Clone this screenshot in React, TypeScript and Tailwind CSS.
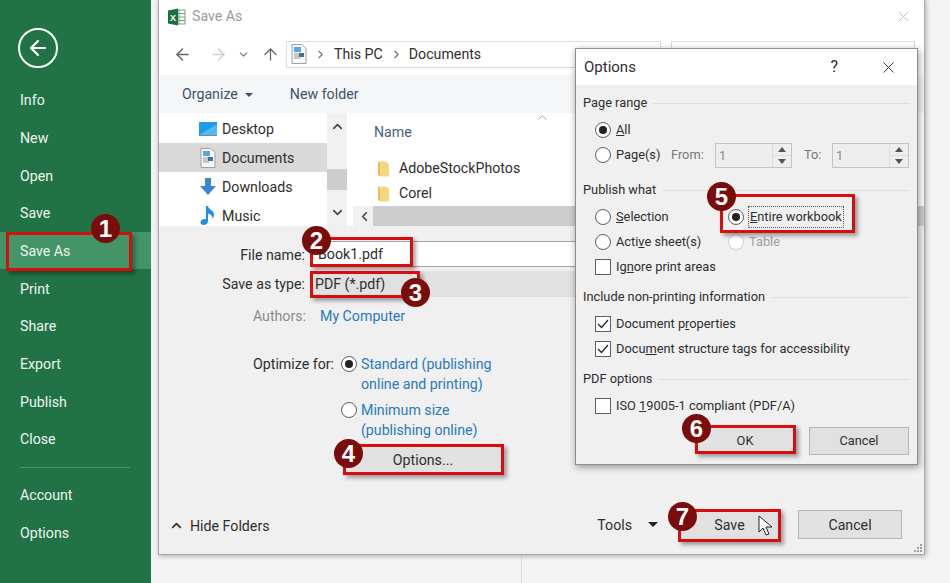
import React from "react";
import { ArrowLeft, ArrowRight, ArrowUp, ChevronDown, ChevronUp, ChevronLeft, ChevronRight, X } from "lucide-react";

const sideTop = ["Info", "New", "Open", "Save", "Save As", "Print", "Share", "Export", "Publish", "Close"];

function DocIcon() {
  return (
    <svg width="16" height="20" viewBox="0 0 16 20">
      <path d="M1 .5h10l4 4v15H1z" fill="#f7f7f7" stroke="#9aa0a6" />
      <rect x="3" y="3" width="7" height="5" fill="#5aa7e0" />
      <path d="M3 10h10M3 12h10M3 14h6" stroke="#8c9aa8" />
      <rect x="8" y="9" width="5" height="4" fill="#4a6f95" />
    </svg>
  );
}

function FolderIcon() {
  return (
    <svg width="13" height="17" viewBox="0 0 13 17">
      <path d="M1 1.500h7l4 2v13H3l-2-2z" fill="#f7d77e" />
      <path d="M1 1.500v13l2 2V3.500z" fill="#e8bd55" />
    </svg>
  );
}

function Radio({ on, off }: { on?: boolean; off?: boolean }) {
  return (
    <span className={off ? "flex h-[16px] w-[16px] shrink-0 items-center justify-center rounded-full border border-[#cfcfcf] bg-white" : "flex h-[16px] w-[16px] shrink-0 items-center justify-center rounded-full border border-[#5f5f5f] bg-white"}>
      {on ? <span className="h-[8px] w-[8px] rounded-full bg-[#222]" /> : null}
    </span>
  );
}

function Check({ on }: { on?: boolean }) {
  return (
    <span className="flex h-[16px] w-[16px] shrink-0 items-center justify-center border border-[#5f5f5f] bg-white">
      {on ? (
        <svg width="12" height="10" viewBox="0 0 12 10">
          <path d="M1 5l3.500 3.500L11 1" fill="none" stroke="#222" strokeWidth="1.2" />
        </svg>
      ) : null}
    </span>
  );
}

function Heading({ children }: { children: React.ReactNode }) {
  return (
    <div className="flex h-[20px] items-center gap-[6px] pr-[7px]">
      <span className="whitespace-nowrap">{children}</span>
      <span className="h-px flex-1 bg-[#e0e0e0]" />
    </div>
  );
}

function Spin() {
  return (
    <div className="flex h-[25px] w-[77px] items-center border border-[#c4c4c4] bg-[#eeeeee] text-[#8a8a8a]">
      <span className="flex-1 pl-[3px] pt-[2px]">1</span>
      <div className="flex h-full w-[19px] flex-col border-l border-[#dcdcdc]">
        <span className="flex flex-1 items-center justify-center border-b border-[#dcdcdc]">
          <span className="h-0 w-0 border-x-[4px] border-b-[5px] border-x-transparent border-b-[#555]" />
        </span>
        <span className="flex flex-1 items-center justify-center">
          <span className="h-0 w-0 border-x-[4px] border-t-[5px] border-x-transparent border-t-[#555]" />
        </span>
      </div>
    </div>
  );
}

function Mark({ className }: { className: string }) {
  return <div className={`absolute border-[3px] border-[#d80e0e] shadow-[3px_3px_4px_rgba(0,0,0,0.35)] ${className}`} />;
}

function Badge({ n, className }: { n: number; className: string }) {
  return (
    <div className={`absolute flex h-[29px] w-[29px] items-center justify-center rounded-full bg-[#7a0c0c] font-['Liberation_Sans',sans-serif] text-[24px] font-bold leading-none text-white ${className}`}>
      {n}
    </div>
  );
}

export default function App() {
  return (
    <div className="relative flex h-[583px] w-[950px] overflow-hidden bg-[#f3f3f3] font-['Roboto',sans-serif] text-[14.2px] text-[#2e2e2e]">
      {/* Backstage sidebar */}
      <aside className="flex h-full w-[151px] shrink-0 flex-col bg-[#217346] text-[14.2px] text-[#eef5f0]">
        <div className="flex h-[81px] items-start pl-[18px] pt-[28px]">
          <span className="flex h-[40px] w-[40px] items-center justify-center rounded-full border-[2px] border-white">
            <ArrowLeft size={24} strokeWidth={2.2} color="#fff" />
          </span>
        </div>
        {sideTop.map((t) => (
          <div key={t} className={t === "Save As" ? "flex h-[37.7px] items-center bg-[#439467] pl-[20px] pt-[2px]" : "flex h-[37.7px] items-center pl-[20px] pt-[2px]"}>
            {t}
          </div>
        ))}
        <div className="ml-[20px] mr-[21px] mt-[9px] h-px bg-[#4a8f69]" />
        <div className="mt-[8px] flex h-[37.7px] items-center pl-[20px] pt-[2px]">Account</div>
        <div className="flex h-[37.7px] items-center pl-[20px] pt-[2px]">Options</div>
      </aside>

      {/* Backdrop rule under the dialog */}
      <div className="absolute bottom-0 left-[521px] h-[28px] w-px bg-[#dddddd]" />

      {/* Save As window */}
      <section className="absolute left-[158px] top-[-1px] flex h-[556px] w-[767px] flex-col border border-[#a8a8a8] bg-white shadow-[1px_1px_5px_rgba(0,0,0,0.3)]">
        <div className="flex h-[33px] shrink-0 items-center pl-[9px] pr-[12px]">
          <svg width="18" height="18" viewBox="0 0 18 18">
            <rect x="7" y="2" width="10" height="14" fill="#fff" stroke="#6fa287" />
            <path d="M7 5.500h10M7 9h10M7 12.500h10M11 2v14" stroke="#6fa287" />
            <path d="M0 2.500L10 .5v17L0 15.500z" fill="#1d6f42" />
            <text x="2" y="12.500" fill="#fff" fontSize="9" fontWeight="700" fontFamily="Liberation Sans">X</text>
          </svg>
          <span className="ml-[6px] text-[#9b9b9b]">Save As</span>
          <span className="ml-auto text-[#b5b5b5]"><X size={17} strokeWidth={1.2} /></span>
        </div>
        <div className="flex h-[42px] shrink-0 items-center pl-[14px] pr-[9px]">
          <ArrowLeft size={19} strokeWidth={1.8} color="#666" />
          <ArrowRight size={19} strokeWidth={1.8} color="#cfcfcf" className="ml-[17px]" />
          <ChevronDown size={13} strokeWidth={2} color="#777" className="ml-[9px]" />
          <ArrowUp size={19} strokeWidth={1.6} color="#666" className="ml-[11px]" />
          <div className="ml-[6px] flex h-[27px] w-[375px] items-center border border-[#dcdcdc] pl-[4px]">
            <DocIcon />
            <ChevronRight size={13} strokeWidth={2.2} color="#777" className="ml-[7px]" />
            <span className="ml-[7px] pt-[2px]">This PC</span>
            <ChevronRight size={13} strokeWidth={2.2} color="#777" className="ml-[7px]" />
            <span className="ml-[6px] pt-[2px]">Documents</span>
          </div>
          <div className="ml-[10px] h-[27px] flex-1 border border-[#dcdcdc]" />
        </div>
        <div className="flex h-[38px] shrink-0 items-center bg-[#f5f6f7] pl-[23px] pt-[2px] text-[#3d5269]">
          <span>Organize</span>
          <span className="ml-[7px] h-0 w-0 border-x-[4px] border-t-[4px] border-x-transparent border-t-[#3d5269]" />
          <span className="ml-[37px]">New folder</span>
        </div>
        <div className="flex h-[113px] shrink-0">
          <div className="w-[168px] shrink-0 pt-[1px]">
            <div className="flex h-[29px] items-center pl-[40px]">
              <svg width="18" height="14" viewBox="0 0 18 14"><rect width="18" height="13" fill="#1f9be8" /><path d="M0 13L18 2v11z" fill="#4fb9f2" /><rect y="13" width="18" height="1" fill="#7a8a99" /></svg>
              <span className="ml-[5px] pt-[2px]">Desktop</span>
            </div>
            <div className="flex h-[29px] items-center bg-[#d9d9d9] pl-[41px]">
              <DocIcon />
              <span className="ml-[6px] pt-[2px]">Documents</span>
            </div>
            <div className="flex h-[29px] items-center pl-[40px]">
              <svg width="18" height="17" viewBox="0 0 18 17"><path d="M6 0h6v8h5l-8 9-8-9h5z" fill="#3a87d6" /></svg>
              <span className="ml-[5px] pt-[2px]">Downloads</span>
            </div>
            <div className="flex h-[29px] items-center pl-[40px]">
              <svg width="18" height="19" viewBox="0 0 18 19"><path d="M7 0h2c.5 4 6 4 6 9 0 1.500-.6 2.500-1.500 3.500.2-3-2.500-4.500-4.500-5V15c0 2.500-2 4-4.500 4C2.500 19 1.500 18 1.500 16.500 1.500 14 4.500 12.500 7 13.300z" fill="#1f8fe6" /></svg>
              <span className="ml-[5px] pt-[2px]">Music</span>
            </div>
          </div>
          <div className="relative flex w-[20px] shrink-0 flex-col items-center justify-between bg-[#f1f1f1] py-[6px] text-[#444]">
            <ChevronUp size={15} strokeWidth={2.6} />
            <span className="absolute left-0 top-[56px] h-[21px] w-full bg-[#cdcdcd]" />
            <ChevronDown size={15} strokeWidth={2.6} />
          </div>
          <div className="flex min-w-0 flex-1 flex-col pl-[2px]">
            <div className="relative h-[93px] shrink-0 pl-[25px] pt-[9px]">
              <span className="text-[#4a5f78]">Name</span>
              <ChevronUp size={15} strokeWidth={1} color="#777" className="absolute left-[186px] top-[-3px]" />
              <div className="mt-[13px] flex h-[25px] items-center pl-[3px]">
                <FolderIcon />
                <span className="ml-[9px]">AdobeStockPhotos</span>
              </div>
              <div className="flex h-[25px] items-center pl-[3px]">
                <FolderIcon />
                <span className="ml-[9px]">Corel</span>
              </div>
            </div>
            <div className="ml-[4px] flex h-[20px] items-stretch bg-[#f1f1f1] pl-[3px]">
              <span className="flex w-[17px] items-center justify-center text-[#444]"><ChevronLeft size={15} strokeWidth={2.6} /></span>
              <span className="flex-1 bg-[#cdcdcd]" />
            </div>
          </div>
        </div>

        {/* Form */}
        <div className="relative flex flex-1 flex-col bg-[#f0f0f0]">
          <div className="ml-[146px] mr-[9px] mt-[15px] flex h-[26px]">
            <span className="-ml-[146px] w-[146px] shrink-0 self-center pt-[3px] text-right">File name:</span>
            <div className="ml-[6px] flex flex-1 items-center border border-[#a5a5a5] bg-white pl-[6px] pt-[2px]">Book1.pdf</div>
          </div>
          <div className="ml-[146px] mr-[9px] mt-[4px] flex h-[26px]">
            <span className="-ml-[146px] w-[146px] shrink-0 self-center pt-[2px] text-right">Save as type:</span>
            <div className="ml-[6px] flex flex-1 items-center bg-[#e1e1e1] pl-[4px] pt-[2px]">PDF (*.pdf)</div>
          </div>
          <div className="mt-[10px] flex h-[20px] items-center">
            <span className="w-[147px] text-right text-[#8b8b8b]">Authors:</span>
            <span className="ml-[14px] text-[#2b79c2]">My Computer</span>
          </div>
          <div className="mt-[27px] flex">
            <span className="h-[20px] w-[175px] text-right leading-[20px]">Optimize for:</span>
            <div className="ml-[7px] flex flex-col gap-[6px]">
              <div className="flex">
                <span className="mt-[2px]"><Radio on /></span>
                <span className="ml-[4px] leading-[20px] text-[#2b79c2]">Standard (publishing<br />online and printing)</span>
              </div>
              <div className="flex">
                <span className="mt-[2px]"><Radio /></span>
                <span className="ml-[4px] leading-[20px] text-[#2b79c2]">Minimum size<br />(publishing online)</span>
              </div>
            </div>
          </div>
          <div className="ml-[184px] mt-[6px] flex h-[27px] w-[160px] items-center justify-center bg-[#e1e1e1] pt-[3px]">Options...</div>
          <div className="mb-[15px] mr-[22px] mt-auto flex h-[30px] items-center">
            <ChevronUp size={15} strokeWidth={2.8} className="ml-[10px] mt-[3px]" color="#333" />
            <span className="ml-[6px] mt-[5px]">Hide Folders</span>
            <span className="ml-auto mt-[3px]">Tools</span>
            <span className="ml-[16px] h-0 w-0 border-x-[5px] border-t-[5px] border-x-transparent border-t-[#222]" />
            <div className="ml-[20px] flex h-[29px] w-[103px] items-center justify-center bg-[#e1e1e1] pt-[3px]">Save</div>
            <div className="ml-[17px] flex h-[29px] w-[104px] items-center justify-center border border-[#b5b5b5] bg-[#e1e1e1] pt-[3px]">Cancel</div>
          </div>
          <svg className="absolute bottom-[1px] right-[1px]" width="10" height="10" viewBox="0 0 10 10" fill="#a0a0a0">
            <rect x="7" y="1" width="2" height="2" /><rect x="4" y="4" width="2" height="2" /><rect x="7" y="4" width="2" height="2" /><rect x="1" y="7" width="2" height="2" /><rect x="4" y="7" width="2" height="2" /><rect x="7" y="7" width="2" height="2" />
          </svg>
        </div>
      </section>

      {/* Options window */}
      <section className="absolute left-[575px] top-[48px] flex h-[417px] w-[343px] flex-col border border-[#8e8e8e] bg-[#f0f0f0] text-[12.8px] shadow-[1px_2px_7px_rgba(0,0,0,0.4)]">
        <div className="flex h-[36px] shrink-0 items-center bg-white pl-[8px]">
          <span className="text-[15px]">Options</span>
          <span className="ml-auto text-[16px]">?</span>
          <span className="ml-[41px] mr-[19px]"><X size={19} strokeWidth={1.2} /></span>
        </div>
        <div className="flex flex-1 flex-col pl-[7px] pt-[8px]">
          <Heading>Page range</Heading>
          <div className="mt-[4.500px] flex h-[25px] items-center gap-[5px] pl-[12px]"><Radio on /><span><u>A</u>ll</span></div>
          <div className="flex h-[25px] items-center pl-[12px]">
            <div className="flex w-[76px] items-center gap-[5px]"><Radio /><span>Pa<u>g</u>e(s)</span></div>
            <span className="w-[44px] text-[#777]">From:</span>
            <Spin />
            <span className="w-[40px] pl-[12px] text-[#777]">To:</span>
            <Spin />
          </div>
          <div className="mt-[12.500px]"><Heading>Publish what</Heading></div>
          <div className="mt-[4.500px] grid grid-cols-[133px_1fr] pl-[12px]">
            <div className="flex h-[25px] items-center gap-[5px]"><Radio /><span><u>S</u>election</span></div>
            <div className="flex h-[25px] items-center gap-[4px]"><Radio on /><span className="border border-dotted border-[#555] px-px"><u>E</u>ntire workbook</span></div>
            <div className="flex h-[25px] items-center gap-[5px]"><Radio /><span>Acti<u>v</u>e sheet(s)</span></div>
            <div className="flex h-[25px] items-center gap-[5px] text-[#a0a0a0]"><Radio off /><span>Table</span></div>
            <div className="col-span-2 flex h-[25px] items-center gap-[5px]"><Check /><span>Ig<u>n</u>ore print areas</span></div>
          </div>
          <div className="mt-[7.500px]"><Heading>Include non-printing information</Heading></div>
          <div className="mt-[4.500px] flex h-[25px] items-center gap-[5px] pl-[12px]"><Check on /><span>Document p<u>r</u>operties</span></div>
          <div className="flex h-[25px] items-center gap-[5px] pl-[12px]"><Check on /><span>Docu<u>m</u>ent structure tags for accessibility</span></div>
          <div className="mt-[7.500px]"><Heading>PDF options</Heading></div>
          <div className="mt-[4.500px] flex h-[25px] items-center gap-[5px] pl-[12px]"><Check /><span>ISO <u>1</u>9005-1 compliant (PDF/A)</span></div>
          <div className="mt-[8.500px] flex justify-end gap-[14px] pr-[8px]">
            <div className="flex h-[27px] w-[100px] items-center justify-center bg-[#e1e1e1]">OK</div>
            <div className="flex h-[28px] w-[100px] items-center justify-center border border-[#b5b5b5] bg-[#e1e1e1]">Cancel</div>
          </div>
        </div>
      </section>

      {/* Callouts */}
      <Mark className="left-[6px] top-[232px] h-[39px] w-[126px]" />
      <Mark className="left-[310px] top-[237px] h-[30px] w-[103px]" />
      <Mark className="left-[310px] top-[271px] h-[27px] w-[110px]" />
      <Mark className="left-[343px] top-[444px] h-[31px] w-[161px]" />
      <Mark className="left-[720px] top-[194px] h-[39px] w-[135px]" />
      <Mark className="left-[695px] top-[425px] h-[29px] w-[101px]" />
      <Mark className="left-[678px] top-[509px] h-[33px] w-[103px]" />
      <Badge n={1} className="left-[91px] top-[214px]" />
      <Badge n={2} className="left-[302px] top-[226px]" />
      <Badge n={3} className="left-[401px] top-[278px]" />
      <Badge n={4} className="left-[334px] top-[439px]" />
      <Badge n={5} className="left-[707px] top-[182px]" />
      <Badge n={6} className="left-[682px] top-[414px]" />
      <Badge n={7} className="left-[668px] top-[502px]" />

      {/* Pointer */}
      <svg className="absolute left-[758px] top-[515px]" width="16" height="24" viewBox="0 0 16 24">
        <path d="M1 1v16l4-4 3 7 3-1-3-7h6z" fill="#fff" stroke="#222" strokeWidth="1" />
      </svg>
    </div>
  );
}
